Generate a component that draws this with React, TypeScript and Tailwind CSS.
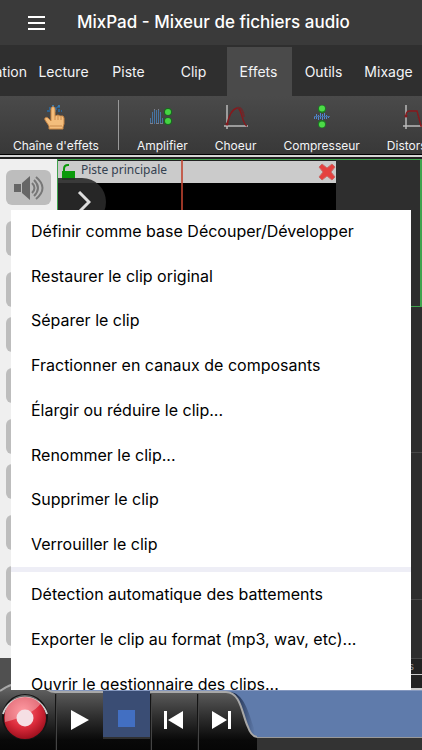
import { ReactNode } from 'react';

const TABS = ['Automation', 'Lecture', 'Piste', 'Clip', 'Effets', 'Outils', 'Mixage'];

const CLIP_ACTIONS = [
  'Définir comme base Découper/Développer',
  'Restaurer le clip original',
  'Séparer le clip',
  'Fractionner en canaux de composants',
  'Élargir ou réduire le clip...',
  'Renommer le clip...',
  'Supprimer le clip',
  'Verrouiller le clip',
];

const MORE_ACTIONS = [
  'Détection automatique des battements',
  'Exporter le clip au format (mp3, wav, etc)...',
  'Ouvrir le gestionnaire des clips...',
];

function ChainIcon() {
  return (
    <svg width="26" height="26" viewBox="0 0 26 26" fill="none">
      <path d="M4 7h3V4h3v3h3V3h3v4h3" stroke="#2f6391" strokeWidth="2" strokeDasharray="3 1" />
      <path d="M9 2h2M15 2h2" stroke="#3d79a8" strokeWidth="2" />
      <path
        d="M8 5c0-3 4-3 4 0v7l3-1 2 1 3 0 1 2v6l-1 3v2H6v-3l-4-6c-1-3 2-3 3-2l3 3z"
        fill="#f3bd7c"
        stroke="#c58343"
        strokeWidth="1"
      />
      <path d="M12 12v4M15 12v4M18 13v3M7 22h12" stroke="#c98a4c" />
    </svg>
  );
}

function AmplifierIcon() {
  return (
    <svg width="26" height="26" viewBox="0 0 26 26" fill="none">
      <path
        d="M1.500 19v-5M3.500 20V8M5.500 20V6M7.500 20V6M9.500 20V6M11.500 20V8M13.500 19v-5"
        stroke="#4674a3"
        strokeWidth="1"
      />
      <path d="M1 19.500h3M5 5.500h1M7 19.500h3M9 5.500h1M11 19.500h3" stroke="#7d7f8c" />
      <circle cx="19" cy="8" r="4" fill="#176b1d" />
      <circle cx="19" cy="17" r="4" fill="#176b1d" />
      <circle cx="19" cy="8" r="3" fill="#45d342" />
      <circle cx="19" cy="17" r="3" fill="#45d342" />
      <path d="M15 12.500h8" stroke="#444" strokeWidth="2" />
    </svg>
  );
}

function ChoirIcon() {
  return (
    <svg width="26" height="26" viewBox="0 0 26 26" fill="none">
      <path d="M4 1v24M1 22h24" stroke="#b9b9b9" strokeWidth="1.500" />
      <path d="M4 21C6 11 10 5 14 4c5-1 5 17 10 18" stroke="#86191d" strokeWidth="1.500" />
      <path d="M14 4c4-1 6 2 7 9" stroke="#6b2a2c" strokeWidth="2" />
      <circle cx="4" cy="20" r="1.500" fill="#86191d" />
    </svg>
  );
}

function CompressorIcon() {
  return (
    <svg width="26" height="26" viewBox="0 0 26 26" fill="none">
      <circle cx="13" cy="5" r="4" fill="#1c7a22" />
      <circle cx="13" cy="20" r="4" fill="#1c7a22" />
      <circle cx="13" cy="4.500" r="3" fill="#4ddb48" />
      <circle cx="13" cy="20.500" r="3" fill="#4ddb48" />
      <path
        d="M5.500 12v3M7.500 10v5M9.500 11v5M11.500 9v6M13.500 10v6M15.500 9v6M17.500 11v4M19.500 12v2"
        stroke="#5286cf"
        strokeWidth="1"
      />
      <path d="M5 12.500h16" stroke="#47709f" strokeWidth="1" />
    </svg>
  );
}

function DistortionIcon() {
  return (
    <svg width="26" height="26" viewBox="0 0 26 26" fill="none">
      <path d="M4 1v24M1 22h24" stroke="#b9b9b9" strokeWidth="1.500" />
      <path d="M4 12c0-4 1-5 4-5h7l4 15h4" stroke="#86191d" strokeWidth="1.500" />
      <circle cx="4" cy="12" r="1.500" fill="#86191d" />
    </svg>
  );
}

function ToolButton({ icon, label }: { icon: ReactNode; label: string }) {
  return (
    <button className="flex shrink-0 flex-col items-center gap-2 pt-2 text-xs leading-4 text-gray-100">
      {icon}
      {label}
    </button>
  );
}

function MenuItem({ label }: { label: string }) {
  return (
    <button role="menuitem" className="flex min-h-0 w-full flex-1 items-center px-5 pb-px text-left whitespace-nowrap">
      {label}
    </button>
  );
}

function TrackControls({ first = false }: { first?: boolean }) {
  return (
    <div className="flex h-[147px] shrink-0 flex-col gap-4 px-1.5 pt-[11px]">
      {['Volume', 'Solo', 'Options'].map((name, i) => (
        <button
          key={name}
          aria-label={name}
          className="flex h-[35px] w-full shrink-0 items-center justify-center rounded-md bg-[#bdbdbd]"
        >
          {first && i === 0 && (
            <svg width="32" height="26" viewBox="0 0 32 26" fill="none">
              <path d="M1 9h7v8H1zM9 8l8-7v24l-8-7z" fill="#666" />
              <path d="M19 8q5 5 0 10M21 5q8 8 0 16M23 2q13 11 0 22" stroke="#777" strokeWidth="2" />
            </svg>
          )}
        </button>
      ))}
    </div>
  );
}

export default function App() {
  return (
    <div className="relative flex h-screen flex-col overflow-hidden bg-[#2e2e2e] font-['Inter','Liberation_Sans',sans-serif]">
      <header className="flex h-[45px] shrink-0 items-center bg-[#3a3a3a] pl-7 text-white">
        <button aria-label="Menu" className="mr-8">
          <svg width="17" height="14" viewBox="0 0 17 14" className="block">
            <path d="M0 1h17M0 7h17M0 13h17" stroke="#fff" strokeWidth="2" />
          </svg>
        </button>
        <h1 className="text-[17px] font-medium whitespace-nowrap">MixPad - Mixeur de fichiers audio</h1>
      </header>

      <nav className="flex h-[51px] shrink-0 justify-end overflow-hidden bg-[#2f2f2f] pt-0.5 text-sm text-gray-100">
        {TABS.map((tab, i) => (
          <button
            key={tab}
            className={`flex w-[65px] shrink-0 items-center pr-0.5 ${i === 0 ? 'justify-end pr-[5px]' : 'justify-center'} ${
              tab === 'Effets' ? 'bg-[#4a4a4a]' : ''
            }`}
          >
            {tab}
          </button>
        ))}
      </nav>

      <div className="flex h-[59px] shrink-0 overflow-hidden border-b border-black bg-linear-to-b from-[#4a4a4a] to-[#383838] pl-[13px]">
        <ToolButton icon={<ChainIcon />} label="Chaîne d'effets" />
        <div className="mr-[18px] ml-[19px] mt-1 mb-1 w-px shrink-0 bg-[#999]" />
        <div className="flex gap-[27px]">
          <ToolButton icon={<AmplifierIcon />} label="Amplifier" />
          <ToolButton icon={<ChoirIcon />} label="Choeur" />
          <ToolButton icon={<CompressorIcon />} label="Compresseur" />
          <ToolButton icon={<DistortionIcon />} label="Distorsion" />
        </div>
      </div>
      <div className="h-1 shrink-0 border-t-2 border-[#d5d5d5] bg-[#222]" />

      <main className="flex min-h-0 flex-1 flex-col">
        <div className="flex min-h-0 flex-1">
          <aside className="flex w-[57px] shrink-0 flex-col overflow-hidden bg-[#efefef]">
            <TrackControls first />
            <TrackControls />
            <TrackControls />
            <TrackControls />
          </aside>

          <div className="flex min-w-0 flex-1 flex-col overflow-hidden">
            <section className="relative h-[148px] shrink-0 border border-r-2 border-[#3fa34d]">
              <div className="flex h-full w-[278px] flex-col border-t border-[#222] bg-black">
                <div className="flex h-[22px] shrink-0 items-center bg-[#cbcbcb] pl-[3px]">
                  <svg width="14" height="16" viewBox="0 0 14 16" fill="none">
                    <path d="M3 8V5q0-4 4-4h1" stroke="#0b9a0b" strokeWidth="2" />
                    <path d="M1 7h13v9H1z" fill="#0b9a0b" />
                  </svg>
                  <span className="flex-1 pb-1 pl-1.5 font-['Noto_Sans',sans-serif] text-xs text-[#344150]">
                    Piste principale
                  </span>
                  <button aria-label="Fermer le clip">
                    <svg width="18" height="18" viewBox="0 0 18 18" className="block">
                      <path
                        d="M4 1l5 4 5-4 3 3-4 5 4 5-3 3-5-4-5 4-3-3 4-5-4-5z"
                        fill="#e5413f"
                        stroke="#c96a68"
                        strokeWidth="1"
                      />
                    </svg>
                  </button>
                </div>
              </div>
              <div className="absolute inset-y-0 left-[123px] w-0.5 bg-[#c0432f]/80" />
              <button
                aria-label="Afficher la piste"
                className="absolute top-[18px] left-0 flex size-12 items-center justify-center rounded-r-full bg-[#2a2a2a]/90 pl-1"
              >
                <svg width="14" height="22" viewBox="0 0 14 22" fill="none">
                  <path d="M2 1l10 10L2 21" stroke="#ddd" strokeWidth="3" />
                </svg>
              </button>
            </section>
            <div className="h-[146px] shrink-0 border-b border-[#484848]" />
            <div className="h-[147px] shrink-0 border-b border-[#484848]" />
          </div>
        </div>
        <div className="flex h-8 shrink-0">
          <div className="w-[57px] bg-[#505050]" />
          <div className="flex flex-1 flex-col items-end border-t border-b-2 border-t-[#484848] border-b-[#ccc] bg-[#222] text-[10px] leading-[15px] text-[#999]">
            <span className="border-b border-[#ccc] pr-2">Effets</span>
          </div>
        </div>
      </main>

      <footer className="relative h-[60px] shrink-0 border-t border-[#8598bf] bg-[#5f7bab]">
        <div className="flex h-full flex-col justify-end">
          <div className="h-[13px] border-t border-[#999] bg-[#333]" />
        </div>
        <svg width="258" height="68" viewBox="0 0 258 68" fill="none" className="absolute bottom-0 left-0">
          <defs>
            <linearGradient id="panel" x1="0" y1="0" x2="0" y2="1">
              <stop offset="0.1" stopColor="#606060" />
              <stop offset="0.5" stopColor="#303030" />
              <stop offset="0.85" stopColor="#090909" />
              <stop offset="1" stopColor="#060606" />
            </linearGradient>
            <linearGradient id="shade" x1="0" y1="0" x2="1" y2="0">
              <stop offset="0.2" stopColor="#1c2b49" />
              <stop offset="1" stopColor="#5f7bab" />
            </linearGradient>
            <radialGradient id="record" cx="0.45" cy="0.35" r="0.65">
              <stop offset="0" stopColor="#ff6672" />
              <stop offset="0.6" stopColor="#d92a3a" />
              <stop offset="1" stopColor="#9e101e" />
            </radialGradient>
          </defs>
          <path d="M229 10c15 0 20 22 25 36l1 8H235z" fill="url(#shade)" />
          <path d="M0 9Q24-8 48 8q3 2 7 2h171c15 0 16 23 22 35q3 9 9 10v13H0z" fill="url(#panel)" />
          <path d="M0 9Q24-8 48 8q3 2 7 2h171c15 0 16 23 22 35q3 9 9 10" stroke="#a8a8a8" strokeWidth="2" />
          <path d="M55.500 12v56M150.500 12v56M197.500 12v56" stroke="#141414" strokeWidth="1" />
          <path d="M56.500 12v56M151.500 12v56M198.500 12v56" stroke="#444" strokeWidth="1" />
          <path d="M103 9h47v46h-47z" fill="#3a4d74" />
          <path d="M103 56h47" stroke="#555" />
          <circle cx="25" cy="35" r="23" fill="#151515" />
          <path d="M3 32a23 23 0 0 1 44 0" stroke="#ccc" strokeWidth="2" />
          <circle cx="25" cy="36" r="21" fill="url(#record)" />
          <path d="M5 34a20 20 0 0 1 36-13Q33 33 5 40z" fill="#fff" opacity="0.35" />
          <circle cx="25" cy="36" r="8.500" fill="#f5dfe4" />
          <path d="M71 28l18 10-18 10z" fill="#fff" />
          <path d="M118 28h17v17h-17z" fill="#426fc2" />
          <path d="M164 29h3v18h-3zM183 29v18l-15-9zM212 29v18l15-9zM228 29h3v18h-3z" fill="#fff" />
        </svg>
        <div className="absolute inset-y-0 left-0 flex">
          <button aria-label="Enregistrer" className="w-14" />
          <button aria-label="Lecture" className="w-[47px]" />
          <button aria-label="Arrêter" className="w-[47px]" />
          <button aria-label="Début" className="w-[47px]" />
          <button aria-label="Fin" className="w-[47px]" />
        </div>
      </footer>

      <div
        role="menu"
        className="absolute inset-x-[11px] top-[210px] bottom-[60px] z-10 overflow-hidden bg-white text-base leading-5 text-black"
      >
        <div className="-mt-px flex h-[358px] flex-col">
          {CLIP_ACTIONS.map((label) => (
            <MenuItem key={label} label={label} />
          ))}
        </div>
        <div className="h-[5px] bg-[#eeeef6]" />
        <div className="flex h-[135px] flex-col">
          {MORE_ACTIONS.map((label) => (
            <MenuItem key={label} label={label} />
          ))}
        </div>
      </div>
    </div>
  );
}
